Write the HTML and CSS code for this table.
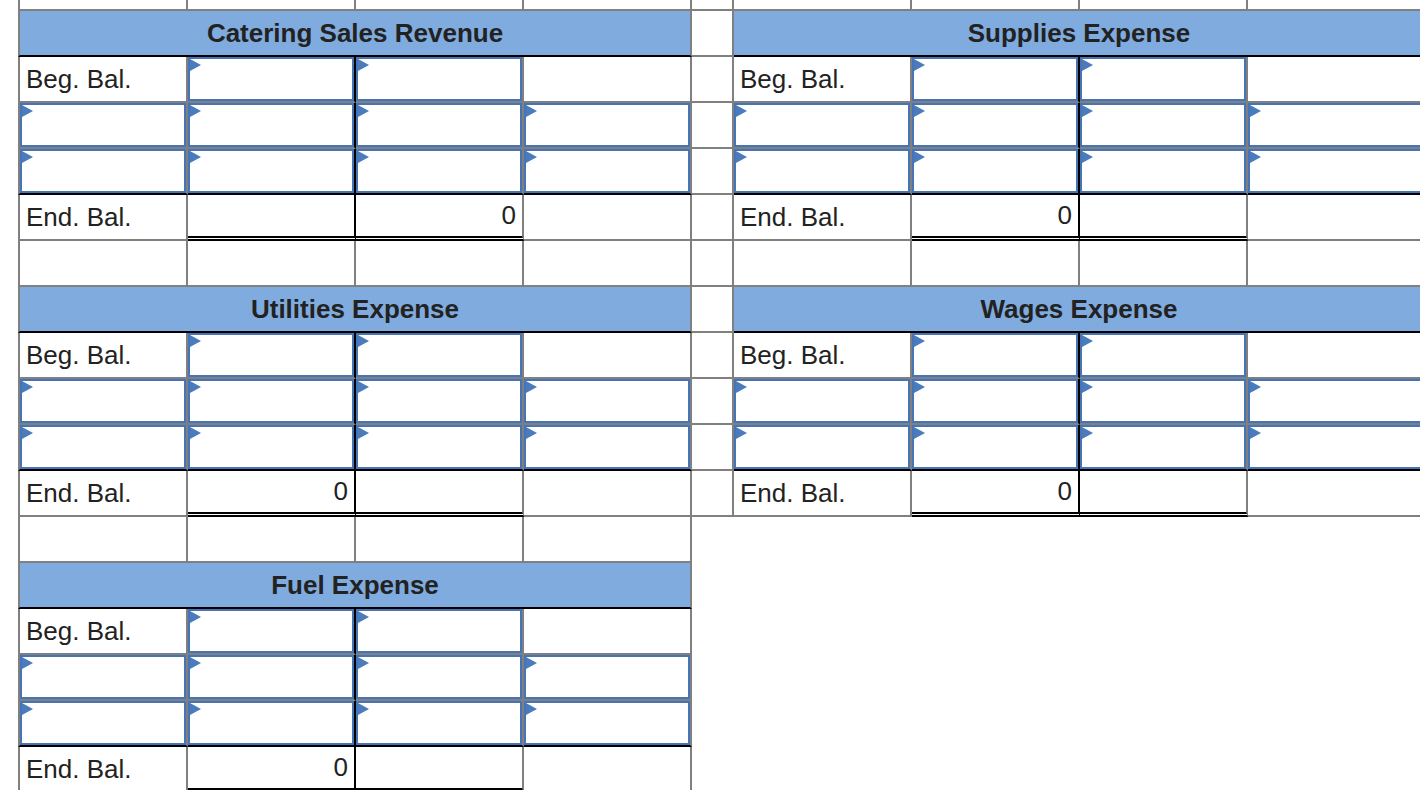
FILE: index.html
```html
<!DOCTYPE html>
<html lang="en">
<head>
<meta charset="utf-8">
<title>T-Accounts</title>
<link rel="stylesheet" href="styles.css">
</head>
<body>
<table class="ledger">
  <colgroup>
    <col class="w-first"><col class="w-col"><col class="w-col"><col class="w-col">
    <col class="w-gap">
    <col class="w-rfirst"><col class="w-col"><col class="w-col"><col class="w-rlast">
  </colgroup>
  <tbody>
    <tr class="stub">
      <td class="first"></td><td></td><td></td><td></td><td class="gap"></td><td></td><td></td><td></td><td></td>
    </tr>

    <!-- Catering Sales Revenue / Supplies Expense -->
    <tr>
      <td class="hdr first" colspan="4">Catering Sales Revenue</td><td class="gap"></td><td class="hdr" colspan="4">Supplies Expense</td>
    </tr>
    <tr>
      <td class="first">Beg. Bal.</td><td class="in t"><input class="box" type="text"></td><td class="in"><input class="box" type="text"></td><td></td>
      <td class="gap"></td>
      <td>Beg. Bal.</td><td class="in t"><input class="box" type="text"></td><td class="in"><input class="box" type="text"></td><td></td>
    </tr>
    <tr>
      <td class="in first"><input class="box" type="text"></td><td class="in t"><input class="box" type="text"></td><td class="in"><input class="box" type="text"></td><td class="in"><input class="box" type="text"></td>
      <td class="gap"></td>
      <td class="in"><input class="box" type="text"></td><td class="in t"><input class="box" type="text"></td><td class="in"><input class="box" type="text"></td><td class="in"><input class="box" type="text"></td>
    </tr>
    <tr>
      <td class="in first close"><input class="box" type="text"></td><td class="in t close"><input class="box" type="text"></td><td class="in close"><input class="box" type="text"></td><td class="in close"><input class="box" type="text"></td>
      <td class="gap"></td>
      <td class="in close"><input class="box" type="text"></td><td class="in t close"><input class="box" type="text"></td><td class="in close"><input class="box" type="text"></td><td class="in close"><input class="box" type="text"></td>
    </tr>
    <tr>
      <td class="first">End. Bal.</td><td class="t dbl"></td><td class="dbl num">0</td><td></td>
      <td class="gap"></td>
      <td>End. Bal.</td><td class="t dbl num">0</td><td class="dbl"></td><td></td>
    </tr>
    <tr>
      <td class="first"></td><td></td><td></td><td></td><td class="gap"></td><td></td><td></td><td></td><td></td>
    </tr>

    <!-- Utilities Expense / Wages Expense -->
    <tr>
      <td class="hdr first" colspan="4">Utilities Expense</td><td class="gap"></td><td class="hdr" colspan="4">Wages Expense</td>
    </tr>
    <tr>
      <td class="first">Beg. Bal.</td><td class="in t"><input class="box" type="text"></td><td class="in"><input class="box" type="text"></td><td></td>
      <td class="gap"></td>
      <td>Beg. Bal.</td><td class="in t"><input class="box" type="text"></td><td class="in"><input class="box" type="text"></td><td></td>
    </tr>
    <tr>
      <td class="in first"><input class="box" type="text"></td><td class="in t"><input class="box" type="text"></td><td class="in"><input class="box" type="text"></td><td class="in"><input class="box" type="text"></td>
      <td class="gap"></td>
      <td class="in"><input class="box" type="text"></td><td class="in t"><input class="box" type="text"></td><td class="in"><input class="box" type="text"></td><td class="in"><input class="box" type="text"></td>
    </tr>
    <tr>
      <td class="in first close"><input class="box" type="text"></td><td class="in t close"><input class="box" type="text"></td><td class="in close"><input class="box" type="text"></td><td class="in close"><input class="box" type="text"></td>
      <td class="gap"></td>
      <td class="in close"><input class="box" type="text"></td><td class="in t close"><input class="box" type="text"></td><td class="in close"><input class="box" type="text"></td><td class="in close"><input class="box" type="text"></td>
    </tr>
    <tr>
      <td class="first">End. Bal.</td><td class="t dbl num">0</td><td class="dbl"></td><td></td>
      <td class="gap"></td>
      <td>End. Bal.</td><td class="t dbl num">0</td><td class="dbl"></td><td></td>
    </tr>
    <tr>
      <td class="first"></td><td></td><td></td><td></td>
    </tr>

    <!-- Fuel Expense -->
    <tr>
      <td class="hdr first" colspan="4">Fuel Expense</td>
    </tr>
    <tr>
      <td class="first">Beg. Bal.</td><td class="in t"><input class="box" type="text"></td><td class="in"><input class="box" type="text"></td><td></td>
    </tr>
    <tr>
      <td class="in first"><input class="box" type="text"></td><td class="in t"><input class="box" type="text"></td><td class="in"><input class="box" type="text"></td><td class="in"><input class="box" type="text"></td>
    </tr>
    <tr>
      <td class="in first close"><input class="box" type="text"></td><td class="in t close"><input class="box" type="text"></td><td class="in close"><input class="box" type="text"></td><td class="in close"><input class="box" type="text"></td>
    </tr>
    <tr>
      <td class="first">End. Bal.</td><td class="t dbl num">0</td><td class="dbl"></td><td></td>
    </tr>
  </tbody>
</table>
</body>
</html>
```

FILE: styles.css
```css
html, body {
  margin: 0;
  padding: 0;
  overflow: hidden;
  background: #ffffff;
}

body {
  font-family: "Liberation Sans", Arial, Helvetica, sans-serif;
  font-size: 26px;
  color: #222222;
}

.ledger {
  border-collapse: separate;
  border-spacing: 0;
  table-layout: fixed;
  width: 1408px;
  margin-left: 18px;
}

.w-first { width: 170px; }
.w-col { width: 168px; }
.w-gap { width: 42px; }
.w-rfirst { width: 178px; }
.w-rlast { width: 178px; }

.ledger tr { height: 46px; }
.ledger tr.stub { height: 11px; }

.ledger td {
  border-right: 2px solid #808080;
  border-bottom: 2px solid #808080;
  padding: 0 6px;
  vertical-align: middle;
  white-space: nowrap;
  overflow: hidden;
  line-height: normal;
}

.ledger td.first { border-left: 2px solid #808080; }

.ledger td.hdr {
  background: #80abdf;
  border-bottom-color: #000000;
  font-weight: 700;
  text-align: center;
}

.ledger td.t { border-right-color: #000000; }
.ledger td.close { border-bottom-color: #000000; }
.ledger td.dbl { border-bottom: 5px double #000000; }
.ledger td.num { text-align: right; }

.ledger td.in {
  position: relative;
  padding: 0;
  vertical-align: top;
}

/* small input marker in the top-left corner of each entry box */
.ledger td.in::before {
  content: "";
  position: absolute;
  top: 2px;
  left: 2px;
  width: 0;
  height: 0;
  border-left: 11px solid #4a7bbd;
  border-top: 6px solid transparent;
  border-bottom: 6px solid transparent;
  pointer-events: none;
}

.box {
  display: block;
  box-sizing: border-box;
  width: 100%;
  height: 44px;
  margin: 0;
  padding: 0 6px;
  border: 2px solid #4674b4;
  border-radius: 0;
  outline: none;
  font: inherit;
  color: inherit;
  background: #ffffff;
}
```
